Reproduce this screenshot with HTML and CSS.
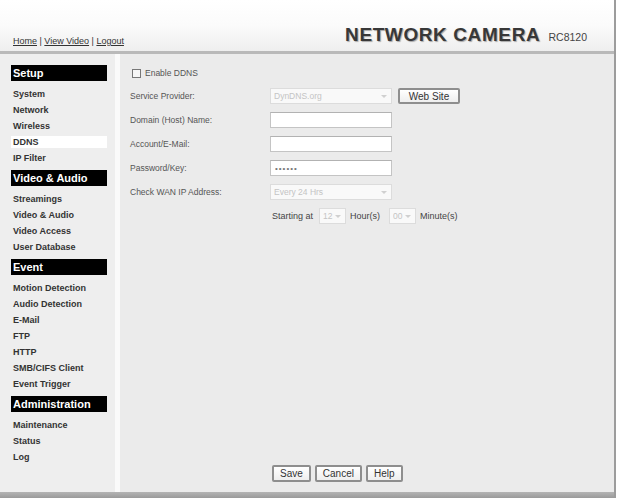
FILE: index.html
```html
<!DOCTYPE html>
<html lang="en">
<head>
  <meta charset="UTF-8" />
  <title>Network Camera - DDNS</title>
  <link rel="stylesheet" href="styles.css">
</head>
<body>
  <div class="frame">
    <div class="top-bar">
      <div class="top-links">
        <a href="#">Home</a> | <a href="#">View Video</a> | <a href="#">Logout</a>
      </div>
      <div class="brand">NETWORK CAMERA <span class="model">RC8120</span></div>
    </div>

    <div class="main">
      <div class="sidebar">
        <div class="menu-head first">Setup</div>
        <a class="menu-item" href="#">System</a>
        <a class="menu-item" href="#">Network</a>
        <a class="menu-item" href="#">Wireless</a>
        <a class="menu-item active" href="#">DDNS</a>
        <a class="menu-item" href="#">IP Filter</a>

        <div class="menu-head">Video &amp; Audio</div>
        <a class="menu-item" href="#">Streamings</a>
        <a class="menu-item" href="#">Video &amp; Audio</a>
        <a class="menu-item" href="#">Video Access</a>
        <a class="menu-item" href="#">User Database</a>

        <div class="menu-head">Event</div>
        <a class="menu-item" href="#">Motion Detection</a>
        <a class="menu-item" href="#">Audio Detection</a>
        <a class="menu-item" href="#">E-Mail</a>
        <a class="menu-item" href="#">FTP</a>
        <a class="menu-item" href="#">HTTP</a>
        <a class="menu-item" href="#">SMB/CIFS Client</a>
        <a class="menu-item" href="#">Event Trigger</a>

        <div class="menu-head">Administration</div>
        <a class="menu-item" href="#">Maintenance</a>
        <a class="menu-item" href="#">Status</a>
        <a class="menu-item" href="#">Log</a>
      </div>

      <div class="content">
        <label class="enable-row">
          <input type="checkbox" class="check" />
          <span>Enable DDNS</span>
        </label>

        <div class="form">
          <div class="label">Service Provider:</div>
          <div class="field">
            <span class="sel wide"><select disabled><option>DynDNS.org</option></select></span>
            <button class="btn web">Web Site</button>
          </div>

          <div class="label">Domain (Host) Name:</div>
          <div class="field"><input class="txt" type="text" /></div>

          <div class="label">Account/E-Mail:</div>
          <div class="field"><input class="txt" type="text" /></div>

          <div class="label">Password/Key:</div>
          <div class="field"><input class="txt" type="password" value="secret" /></div>

          <div class="label">Check WAN IP Address:</div>
          <div class="field">
            <span class="sel wide"><select disabled><option>Every 24 Hrs</option></select></span>
          </div>

          <div class="label"></div>
          <div class="field start">
            <span class="start-text">Starting at</span>
            <span class="sel small"><select disabled><option>12</option></select></span>
            <span class="unit">Hour(s)</span>
            <span class="sel small"><select disabled><option>00</option></select></span>
            <span class="unit">Minute(s)</span>
          </div>
        </div>

        <div class="actions">
          <button class="btn">Save</button>
          <button class="btn">Cancel</button>
          <button class="btn">Help</button>
        </div>
      </div>
    </div>

    <div class="bottom-bar"></div>
  </div>
</body>
</html>
```

FILE: styles.css
```css
body {
  margin: 0;
  background: #fff;
  font-family: "Liberation Sans", Arial, sans-serif;
  color: #444;
}
.frame {
  width: 614px;
  height: 498px;
  border-right: 2px solid #9c9c9c;
  display: flex;
  flex-direction: column;
}

/* шапка */
.top-bar {
  height: 54px;
  flex-shrink: 0;
  box-sizing: border-box;
  background: linear-gradient(#ffffff 0%, #fbfbfb 50%, #eeeeee 100%);
  border-bottom: 3px solid #b9b9b9;
  display: flex;
  justify-content: space-between;
  align-items: baseline;
  padding: 0 27px 5px 13px;
}
.top-links {
  font-size: 9px;
  color: #333;
  align-self: flex-end;
}
.top-links a {
  color: #333;
}
.brand {
  align-self: flex-end;
  font-size: 19px;
  font-weight: bold;
  color: #383838;
  letter-spacing: 0.6px;
  text-shadow: 1px 1px 1px #a8a8a8;
}
.model {
  font-size: 10.5px;
  font-weight: normal;
  letter-spacing: 0;
  margin-left: 3px;
  text-shadow: none;
  color: #444;
}

.main {
  flex: 1;
  display: flex;
  min-height: 0;
}

/* меню слева */
.sidebar {
  width: 120px;
  box-sizing: border-box;
  background: #eeeeee;
  border-right: 5px solid #fafafa;
  padding: 11px 0 0 11px;
  display: flex;
  flex-direction: column;
  flex-shrink: 0;
}
.menu-head {
  width: 96px;
  height: 16px;
  line-height: 16px;
  box-sizing: border-box;
  padding-left: 2px;
  margin: 4px 0 5px;
  background: #000;
  color: #fff;
  font-size: 11px;
  font-weight: bold;
}
.menu-head.first {
  margin-top: 0;
}
.menu-item {
  width: 96px;
  box-sizing: border-box;
  line-height: 12px;
  margin: 2px 0;
  padding-left: 2px;
  font-size: 9px;
  font-weight: bold;
  color: #333;
  text-decoration: none;
}
.menu-item.active {
  background: #fff;
}

/* форма */
.content {
  flex: 1;
  background: #ebebeb;
  padding: 11px 0 10px 10px;
  display: flex;
  flex-direction: column;
  font-size: 8.5px;
}
.enable-row {
  height: 16px;
  display: flex;
  align-items: center;
  gap: 4px;
  color: #555;
}
.check {
  appearance: none;
  width: 9px;
  height: 9px;
  margin: 0 0 0 2px;
  border: 1px solid #777;
  background: #f6f6f6;
  box-sizing: border-box;
}
.form {
  margin-top: 7px;
  display: grid;
  grid-template-columns: 140px 1fr;
  grid-auto-rows: 16px;
  row-gap: 8px;
  align-items: center;
}
.label {
  color: #555;
}
.field {
  display: flex;
  align-items: center;
  height: 16px;
}
.txt {
  width: 122px;
  height: 16px;
  box-sizing: border-box;
  margin: 0;
  padding: 0 4px;
  border: 1px solid #c4c4c4;
  border-top-color: #b2b2b2;
  background: #fff;
  font-family: inherit;
  font-size: 8px;
  color: #777;
  letter-spacing: 1px;
}
.sel {
  position: relative;
  display: inline-block;
  height: 16px;
}
.sel select {
  appearance: none;
  width: 100%;
  height: 16px;
  margin: 0;
  padding: 0 3px;
  border: 1px solid #dcdcdc;
  background: #f9f9f9;
  font-family: inherit;
  font-size: 8.5px;
  color: #c4c4c4;
  opacity: 1;
}
.sel::after {
  content: "";
  position: absolute;
  right: 5px;
  top: 7px;
  border-left: 3px solid transparent;
  border-right: 3px solid transparent;
  border-top: 3px solid #d0d0d0;
}
.sel.wide {
  width: 122px;
}
.sel.small {
  width: 27px;
}
.start-text {
  margin-left: 2px;
  margin-right: 6px;
  font-size: 9px;
  color: #444;
}
.unit {
  margin: 0 9px 0 4px;
  font-size: 9px;
  color: #444;
}
.btn {
  height: 17px;
  box-sizing: border-box;
  padding: 0 6px;
  border: 2px solid #8e8e8e;
  border-radius: 2px;
  background: linear-gradient(#ffffff, #eeeeee);
  font-family: inherit;
  font-size: 10px;
  color: #333;
}
.btn.web {
  width: 62px;
  height: 16px;
  margin-left: 6px;
}
.actions {
  margin-top: auto;
  padding-left: 142px;
  display: flex;
  gap: 4px;
}

.bottom-bar {
  height: 6px;
  flex-shrink: 0;
  background: linear-gradient(#b4b4b4, #9a9a9a);
}
```
